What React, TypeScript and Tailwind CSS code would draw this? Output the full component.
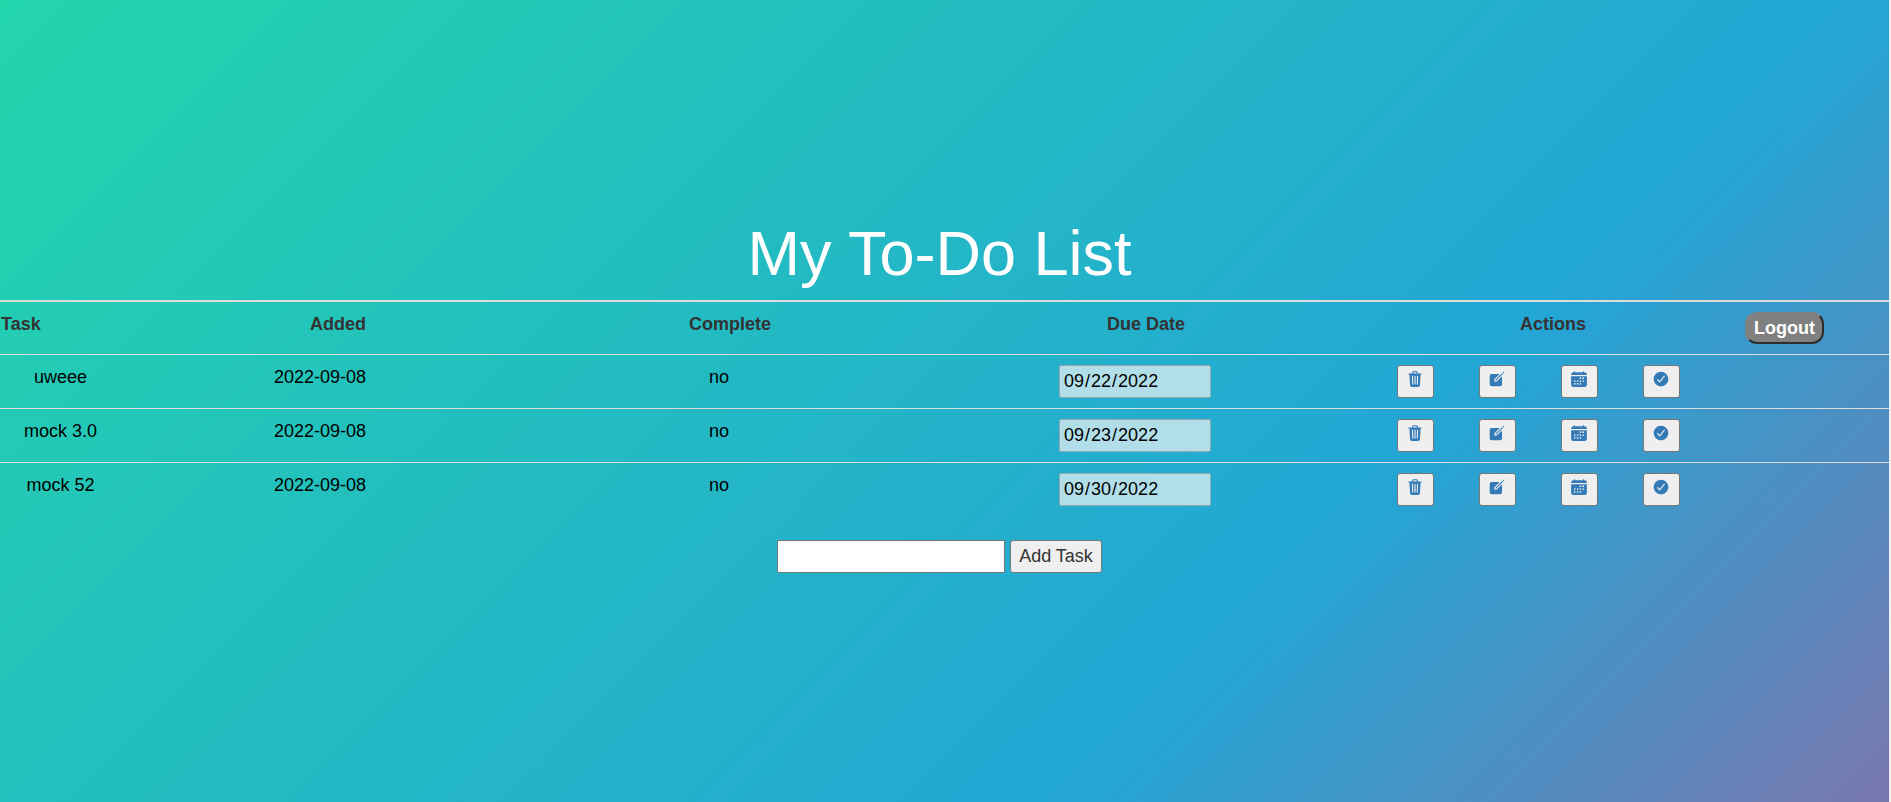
import { useState } from "react";
import type { FormEvent } from "react";
import { IoCalendar, IoCheckmarkCircle, IoCreate, IoTrash } from "react-icons/io5";

type Task = { id: number; name: string; added: string; complete: boolean; due: string };

const initialTasks: Task[] = [
  { id: 1, name: "uweee", added: "2022-09-08", complete: false, due: "2022-09-22" },
  { id: 2, name: "mock 3.0", added: "2022-09-08", complete: false, due: "2022-09-23" },
  { id: 3, name: "mock 52", added: "2022-09-08", complete: false, due: "2022-09-30" },
];

const actions = [
  { label: "Delete", Icon: IoTrash },
  { label: "Edit", Icon: IoCreate },
  { label: "Change due date", Icon: IoCalendar },
  { label: "Mark complete", Icon: IoCheckmarkCircle },
];

function TaskRow({ task }: { task: Task }) {
  const cell = "h-[54px] border-t border-[#ddd] pt-[10px] align-top";
  return (
    <tr>
      <td className={`${cell} text-center`}>{task.name}</td>
      <td className={`${cell} text-right`}>{task.added}</td>
      <td className={`${cell} pl-[52px] text-center`}>{task.complete ? "yes" : "no"}</td>
      <td className={`${cell} pl-[39px]`}>
        <input
          type="date"
          defaultValue={task.due}
          aria-label={`Due date of ${task.name}`}
          className="block h-[33px] w-[152px] rounded-xs border border-[#767676]/50 bg-[#b1dee9] px-[3px] text-black [&::-webkit-calendar-picker-indicator]:opacity-0"
        />
      </td>
      <td className={cell}>
        <div className="flex justify-center gap-[45px]">
          {actions.map(({ label, Icon }) => (
            <button
              key={label}
              type="button"
              aria-label={`${label}: ${task.name}`}
              className="flex h-[33px] w-[37px] justify-center rounded-[3px] border border-[#767676] bg-[#efefef] pt-1 text-[#337ab7]"
            >
              <Icon size={18} />
            </button>
          ))}
        </div>
      </td>
      <td className={cell}></td>
    </tr>
  );
}

export default function App() {
  const [tasks, setTasks] = useState(initialTasks);
  const [name, setName] = useState("");

  const addTask = (event: FormEvent) => {
    event.preventDefault();
    if (!name.trim()) return;
    const today = new Date().toISOString().slice(0, 10);
    setTasks([...tasks, { id: tasks.length + 1, name, added: today, complete: false, due: today }]);
    setName("");
  };

  const head = "h-[54px] border-t-2 border-[#ddd] pt-[10px] align-top font-bold text-[#333]";

  return (
    <main className="flex min-h-screen flex-col justify-center border-r-2 border-[#eee] bg-[linear-gradient(135deg,#23d5ab_0%,#23a6d5_69.5%,#e73c7e_139%)] pb-[10px] font-['Liberation_Sans',Arial,sans-serif] text-[18px] leading-[25px] text-black">
      <h1 className="pr-[10px] pb-[12px] text-center text-[63px] leading-[69px] text-white">My To-Do List</h1>
      <table className="w-full table-fixed border-separate border-spacing-0">
        <colgroup>
          <col className="w-[121px]" />
          <col className="w-[245px]" />
          <col />
          <col className="w-[342px]" />
          <col className="w-[352px]" />
          <col className="w-[175px]" />
        </colgroup>
        <thead>
          <tr>
            <th className={`${head} pl-px text-left`}>Task</th>
            <th className={`${head} text-right`}>Added</th>
            <th className={`${head} pl-[74px] text-center`}>Complete</th>
            <th className={`${head} pr-[90px] text-center`}>Due Date</th>
            <th className={`${head} pl-[30px] text-center`}>Actions</th>
            <th className={`${head} pl-[31px] text-left`}>
              <button
                type="button"
                className="block h-8 w-[79px] rounded-[12px] border-2 border-t-[#808080] border-r-[#2d2d2d] border-b-[#2d2d2d] border-l-[#808080] bg-[#808080] text-center text-white"
              >
                Logout
              </button>
            </th>
          </tr>
        </thead>
        <tbody>
          {tasks.map((task) => (
            <TaskRow key={task.id} task={task} />
          ))}
        </tbody>
      </table>
      <form onSubmit={addTask} className="flex justify-center gap-[5px] pt-6 pr-[10px]">
        <input
          type="text"
          aria-label="New task"
          value={name}
          onChange={(event) => setName(event.target.value)}
          className="h-[33px] w-[228px] rounded-xs border border-[#767676] bg-white px-[3px]"
        />
        <button
          type="submit"
          className="h-[33px] w-[92px] rounded-[3px] border border-[#767676] bg-[#efefef] text-[#333]"
        >
          Add Task
        </button>
      </form>
    </main>
  );
}
